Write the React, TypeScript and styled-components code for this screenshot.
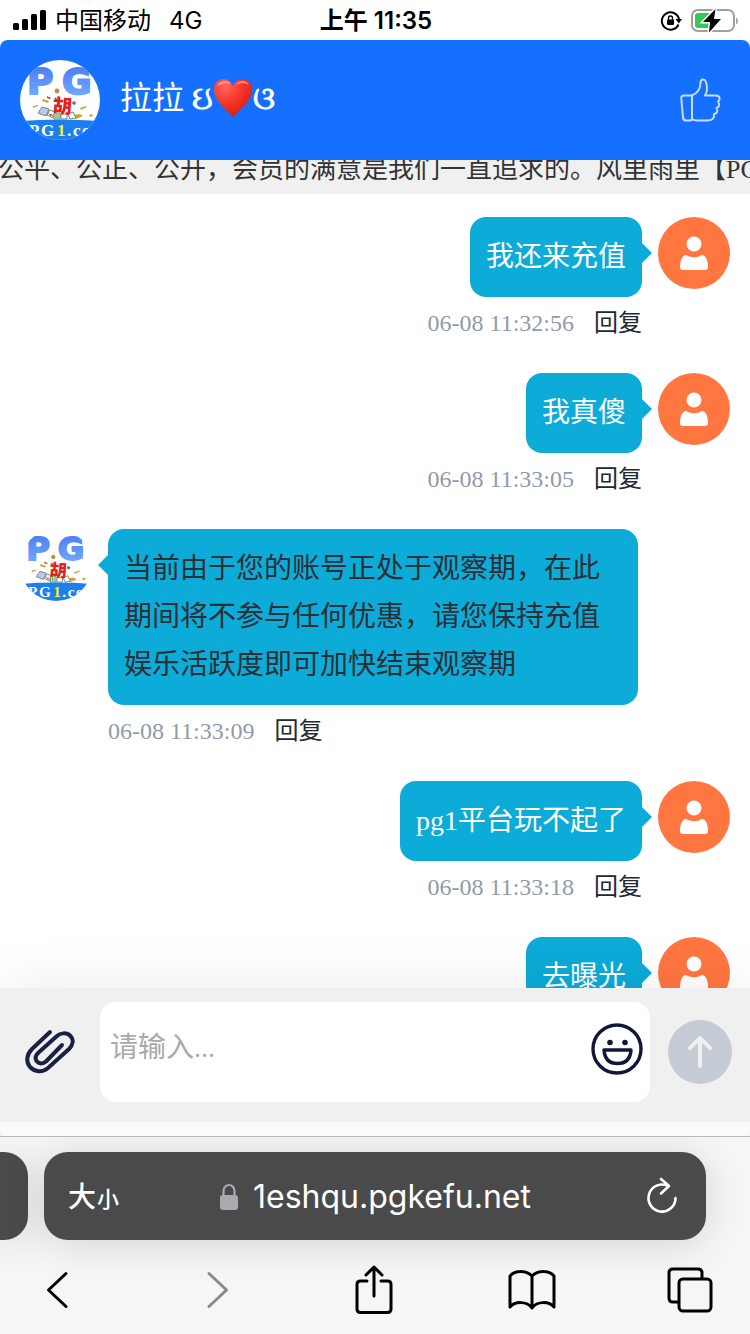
import React from "react";
import styled, { createGlobalStyle } from "styled-components";

const GlobalStyle = createGlobalStyle`
  * { box-sizing: border-box; }
  body { margin: 0; background: #f6f6f6; }
  button { border: 0; padding: 0; background: none; font: inherit; color: inherit; cursor: pointer; }
  svg { display: block; flex: none; }
`;

const serif = `"Liberation Serif", "Noto Sans CJK SC", serif`;
const sans = `Inter, "Noto Sans CJK SC", sans-serif`;

const Page = styled.div`
  display: flex;
  flex-direction: column;
  height: 100vh;
  overflow: hidden;
  background: #f6f6f6;
  font-family: ${serif};
`;

const StatusBar = styled.div`
  flex: none;
  display: grid;
  grid-template-columns: 1fr auto 1fr;
  align-items: center;
  height: 40px;
  padding: 2px 10px 0 12px;
  background: #fff;
  color: #000;
  font-family: ${sans};
  font-size: 24px;
  line-height: 38px;
`;

const StatusSide = styled.div<{ $end?: boolean }>`
  display: flex;
  align-items: center;
  justify-content: ${(p) => (p.$end ? "flex-end" : "flex-start")};
  gap: 8px;
`;

const Network = styled.span`
  margin-left: 10px;
`;

const Clock = styled.div`
  font-weight: 600;
`;

const Header = styled.header`
  flex: none;
  display: flex;
  align-items: center;
  height: 120px;
  padding: 0 28px 0 20px;
  border-radius: 8px 8px 0 0;
  background: #1570ff;
  color: #fff;
`;

const AgentName = styled.h1`
  flex: 1;
  display: flex;
  align-items: center;
  margin: 0 0 4px 20px;
  font-size: 32px;
  line-height: 48px;
  font-weight: 400;
  white-space: pre;
`;

const Ornament = styled.span`
  -webkit-text-stroke: 1px #fff;
`;

const Notice = styled.div`
  flex: none;
  display: flex;
  align-items: flex-end;
  height: 34px;
  overflow: hidden;
  background: #f0f0f0;
  color: #333;
  font-size: 26px;
  line-height: 48px;
  white-space: nowrap;
`;

const NoticeText = styled.span`
  margin-left: -2px;
`;

const Chat = styled.main`
  flex: 1;
  min-height: 0;
  overflow: hidden;
  display: flex;
  flex-direction: column;
  gap: 24px;
  padding: 23px 20px 0;
  background: #fff;
`;

const Message = styled.article<{ $own?: boolean }>`
  flex: none;
  display: flex;
  flex-direction: ${(p) => (p.$own ? "row-reverse" : "row")};
  gap: 16px;
  padding-${(p) => (p.$own ? "left" : "right")}: 92px;
`;

const MessageBody = styled.div<{ $own?: boolean }>`
  display: flex;
  flex-direction: column;
  align-items: ${(p) => (p.$own ? "flex-end" : "flex-start")};
  min-width: 0;
  flex: 1;
`;

const Bubble = styled.p<{ $own?: boolean }>`
  position: relative;
  margin: 0;
  padding: 16px;
  border-radius: 16px;
  background: #0cabd8;
  color: ${(p) => (p.$own ? "#fff" : "#2b2f36")};
  font-size: 28px;
  line-height: 48px;

  &::after {
    content: "";
    position: absolute;
    top: 26px;
    ${(p) => (p.$own ? "left: 100%;" : "right: 100%;")}
    border: 10px solid transparent;
    border-${(p) => (p.$own ? "left" : "right")}-color: #0cabd8;
    border-${(p) => (p.$own ? "right" : "left")}-width: 0;
  }
`;

const Meta = styled.div`
  display: flex;
  align-items: center;
  gap: 20px;
  height: 52px;
  font-size: 24px;
  line-height: 52px;
  color: #8f9bab;
`;

const Reply = styled.button`
  color: #222831;
`;

const Composer = styled.form`
  position: relative;
  flex: none;
  display: flex;
  align-items: center;
  height: 134px;
  padding: 0 18px 6px 24px;
  background: #f0f0f0;
  box-shadow: 0 0 60px rgba(0, 0, 0, 0.08);
`;

const Field = styled.div`
  flex: 1;
  display: flex;
  align-items: flex-start;
  height: 100px;
  margin: 0 18px 0 24px;
  padding-right: 7px;
  border-radius: 16px;
  background: #fff;
`;

const Input = styled.textarea`
  flex: 1;
  min-width: 0;
  height: 100px;
  padding: 22px 0 0 10px;
  border: 0;
  outline: 0;
  resize: none;
  background: none;
  font-family: ${serif};
  font-size: 28px;
  line-height: 48px;
  color: #222831;
  &::placeholder { color: #a9a9a9; opacity: 1; }
`;

const EmojiButton = styled.button`
  margin-top: 21px;
`;

const SendButton = styled.button`
  display: flex;
  align-items: center;
  justify-content: center;
  width: 64px;
  height: 64px;
  border-radius: 50%;
  background: #c5ccd5;
`;

const PageEnd = styled.div`
  flex: none;
  height: 14px;
  position: relative;
  border-radius: 0 0 8px 8px;
  background: #fbfbfb;
`;

const BrowserBar = styled.footer`
  position: relative;
  flex: none;
  border-top: 1px solid #b8b8b8;
  background: #f6f6f6;
  overflow: hidden;
`;

const AddressRow = styled.div`
  display: flex;
  gap: 16px;
  padding: 15px 44px 0 0;
`;

const NeighbourTab = styled.div`
  width: 28px;
  border-radius: 0 24px 24px 0;
  background: #4a4a4a;
  box-shadow: 0 4px 40px rgba(0, 0, 0, 0.14);
`;

const AddressBar = styled.div`
  flex: 1;
  display: grid;
  grid-template-columns: 80px 1fr 80px;
  align-items: center;
  height: 88px;
  padding: 2px 4px 0;
  border-radius: 24px;
  background: #4a4a4a;
  box-shadow: 0 4px 40px rgba(0, 0, 0, 0.14);
  color: #fff;
  font-family: ${sans};
`;

const TextSize = styled.button`
  display: flex;
  align-items: baseline;
  padding: 2px 0 0 20px;
  gap: 1px;
  font-size: 28px;
  line-height: 48px;
  font-weight: 500;
  small { font-size: 22px; }
`;

const Domain = styled.button`
  display: flex;
  align-items: center;
  justify-content: center;
  gap: 14px;
  font-size: 32px;
  line-height: 48px;
`;

const Reload = styled.button`
  display: flex;
  justify-content: center;
  padding-bottom: 4px;
`;

const Toolbar = styled.nav`
  display: flex;
  justify-content: space-between;
  align-items: center;
  height: 94px;
  padding: 6px 22px 0 20px;
`;

const ToolButton = styled.button`
  display: flex;
  align-items: center;
  justify-content: center;
  width: 76px;
  height: 56px;
`;

function Logo({ size }: { size: number }) {
  const id = `logo${size}`;
  return (
    <svg width={size} height={size} viewBox="0 0 80 80" role="img" aria-label="PG1">
      <defs>
        <clipPath id={`${id}c`}><circle cx="40" cy="40" r="40" /></clipPath>
        <linearGradient id={`${id}g`} x1="0" y1="0" x2="0" y2="1">
          <stop offset="0" stopColor="#4576f3" />
          <stop offset="1" stopColor="#77b1ff" />
        </linearGradient>
      </defs>
      <g clipPath={`url(#${id}c)`}>
        <rect width="80" height="80" fill="#fff" />
        <g fontFamily="DejaVu Sans" fontWeight="700" fontSize="36" fill={`url(#${id}g)`} stroke={`url(#${id}g)`} strokeWidth="2">
          <text x="7" y="34">P</text>
          <text x="42" y="34">G</text>
        </g>
        <circle cx="37" cy="31" r="2.4" fill="#c58a3a" />
        <g fill="#d9a13a">
          <path d="M23 39l6 2-1 2-6-2zM60 48l6-2 1 1-6 3zM13 46l5-1 0 1-5 2zM52 55l8-1 3 2-7 3zM69 55l3-1 1 2-3 1z" />
          <path d="M27 36l4 2-1 1-3-1z" fill="#b4442b" />
        </g>
        <path d="M53 41l3 1-1 3-3-1zM34 39l2-2 1 3z" fill="#5d7a62" />
        <g stroke="#6b8a70" strokeWidth="1">
          <path d="M18 53l4-6 7 2-3 7z" fill="#c3c5f5" />
          <path d="M27 55l3-5 5 2-2 6z" fill="#fff" />
          <path d="M34 53h6v6h-6z" fill="#d8f5d5" />
          <path d="M41 54h6v5h-6zM48 54l5-2 3 6-6 1z" fill="#fff" />
        </g>
        <path d="M29 54l4 2M30 56l2-2" stroke="#e0334a" />
        <path d="M36 54v4M38 54v4" stroke="#43ad4d" />
        <text x="33" y="53" fontFamily="Noto Sans CJK SC" fontWeight="900" fontSize="19" fill="#e3201b" transform="rotate(4 42 46)">胡</text>
        <path d="M0 61Q40 58 80 61V80H0z" fill="#1d7fee" />
        <g fontFamily="Liberation Serif" fontWeight="700" fontSize="17" fill="#fff">
          <text x="9" y="76">P</text>
          <text x="21" y="76">G</text>
          <text x="37" y="76" fill="#f5f51c">1</text>
          <text x="47" y="76">.</text>
          <text x="53" y="76">c</text>
          <text x="62" y="76">o</text>
        </g>
      </g>
    </svg>
  );
}

function UserAvatar() {
  return (
    <svg width="72" height="72" viewBox="0 0 72 72" role="img" aria-label="用户">
      <circle cx="36" cy="36" r="36" fill="#ff7641" />
      <circle cx="36" cy="27" r="7.5" fill="#fff" />
      <path d="M28 38q8 4.500 16 0c4 0 6 6 6 12q0 3-3 3H25q-3 0-3-3c0-6 2-12 6-12z" fill="#fff" />
    </svg>
  );
}

type ChatMessage = { text: string; time: string; own?: boolean };

const messages: ChatMessage[] = [
  { text: "我还来充值", time: "06-08 11:32:56", own: true },
  { text: "我真傻", time: "06-08 11:33:05", own: true },
  {
    text: "当前由于您的账号正处于观察期，在此期间将不参与任何优惠，请您保持充值娱乐活跃度即可加快结束观察期",
    time: "06-08 11:33:09",
  },
  { text: "pg1平台玩不起了", time: "06-08 11:33:18", own: true },
  { text: "去曝光", time: "06-08 11:33:25", own: true },
];

export default function App() {
  return (
    <Page>
      <GlobalStyle />
      <StatusBar>
        <StatusSide>
          <svg width="35" height="22" viewBox="0 0 35 22">
            <rect x="1" y="13" width="6" height="7" rx="1.5" />
            <rect x="10" y="9" width="6" height="11" rx="1.5" />
            <rect x="19" y="4" width="6" height="16" rx="1.5" />
            <rect x="28" y="0" width="6" height="20" rx="1.5" />
          </svg>
          <span>中国移动</span>
          <Network>4G</Network>
        </StatusSide>
        <Clock>上午 11:35</Clock>
        <StatusSide $end>
          <svg width="22" height="22" viewBox="0 0 22 22" fill="none" stroke="#000" strokeWidth="2">
            <path d="M18.500 14.500A8.700 8.700 0 1 1 19 9" />
            <path d="M15.500 9h6.500l-3.200 4.500z" fill="#000" stroke="none" />
            <rect x="7" y="9.500" width="7" height="5.500" rx="1" fill="#000" stroke="none" />
            <path d="M8.500 10V8a2 2 0 0 1 4 0v2" strokeWidth="1.400" />
          </svg>
          <svg width="50" height="26" viewBox="0 0 50 26">
            <rect x="2" y="2" width="42" height="21" rx="6" fill="none" stroke="#a0a0a0" strokeWidth="2" />
            <path d="M46 9.500c2.500 1 2.500 6 0 7z" fill="#a0a0a0" />
            <path d="M8 5h16v15H8q-3 0-3-3V8q0-3 3-3z" fill="#35c759" />
            <path d="M25.500 1L13 14h7l-1 10.500L31 11h-7z" fill="#000" stroke="#fff" strokeWidth="3" paintOrder="stroke" />
          </svg>
        </StatusSide>
      </StatusBar>

      <Header>
        <Logo size={80} />
        <AgentName>
          拉拉 <Ornament>ઇ</Ornament>
          <svg width="40" height="40" viewBox="0 0 40 40" role="img" aria-label="❤️">
            <defs>
              <radialGradient id="heart" cx="0.3" cy="0.2" r="0.9">
                <stop offset="0" stopColor="#ff6a5c" />
                <stop offset="0.4" stopColor="#fb3b2f" />
                <stop offset="1" stopColor="#d3170f" />
              </radialGradient>
            </defs>
            <path d="M20 39C12 31 1 22 1 11.500 1 5 5.500 1 10.500 1 15 1 18.500 4 20 8.500 21.500 4 25 1 29.500 1 34.500 1 39 5 39 11.500 39 22 28 31 20 39z" fill="url(#heart)" />
            <path d="M4 8q2.500-5 8-5 4 0 5.500 3-3-1-6-.5Q7 6 4 8zM23 7q2-4 7-4 4 0 6 4-3-2-6.500-2-3 0-6.500 2z" fill="#ffb0a8" opacity=".75" />
          </svg>
          <Ornament>ଓ</Ornament>
        </AgentName>
        <button type="button" aria-label="点赞">
          <svg width="44" height="46" viewBox="0 0 44 46" fill="none" stroke="#c9dcff" strokeWidth="2" strokeLinejoin="round">
            <path d="M13.500 18.500H6q-3 0-2.700 3l1.700 19q.4 3 3 3h4q2 0 2-2V18.500z" />
            <path d="M13.500 18.500q9-3 9-13Q23 2 25.500 2.500 28.500 3 29 11q.2 4-2 7.500h10q5 0 4.500 3.500 0 2-1.500 2.500 1.500 2 1 4T38.500 31q1.500 2 .5 4t-3 2q1 6-6 6.500H19q-3.500 0-5-1.500" />
          </svg>
        </button>
      </Header>

      <Notice>
        <NoticeText>公平、公正、公开，会员的满意是我们一直追求的。风里雨里【PG</NoticeText>
      </Notice>

      <Chat>
        {messages.map((m) => (
          <Message key={m.time} $own={m.own}>
            {m.own ? <UserAvatar /> : <Logo size={72} />}
            <MessageBody $own={m.own}>
              <Bubble $own={m.own}>{m.text}</Bubble>
              <Meta>
                <time>{m.time}</time>
                <Reply type="button">回复</Reply>
              </Meta>
            </MessageBody>
          </Message>
        ))}
      </Chat>

      <Composer onSubmit={(e) => e.preventDefault()}>
        <button type="button" aria-label="附件">
          <svg width="52" height="48" viewBox="0 0 52 48" fill="none" stroke="#1b2145" strokeWidth="4" strokeLinecap="round" strokeLinejoin="round">
            <path d="M26 4L8 21C2 27 2 34 6 39c5 5 12 6 18 1L45 21c4-4 5-9 1.500-13C42.500 4 36 5 33 8L14 25c-3 3-3 6-1 8.500 2 2.500 6 2.500 9 0L38 17" />
          </svg>
        </button>
        <Field>
          <Input aria-label="消息" placeholder="请输入..." />
          <EmojiButton type="button" aria-label="表情">
            <svg width="52" height="52" viewBox="0 0 52 52" fill="none" stroke="#12173a" strokeWidth="3.400" strokeLinejoin="round">
              <circle cx="26" cy="26" r="24" />
              <circle cx="19" cy="19.500" r="2.800" fill="#12173a" stroke="none" />
              <circle cx="34" cy="19.500" r="2.800" fill="#12173a" stroke="none" />
              <path d="M13 27h27Q39 40.500 26.500 40.500T13 27z" />
            </svg>
          </EmojiButton>
        </Field>
        <SendButton type="submit" aria-label="发送">
          <svg width="26" height="34" viewBox="0 0 26 34" fill="none" stroke="#f0f0f0" strokeWidth="4" strokeLinecap="round" strokeLinejoin="round">
            <path d="M13 31V3M3 13L13 3l10 10" />
          </svg>
        </SendButton>
      </Composer>
      <PageEnd />

      <BrowserBar>
        <AddressRow>
          <NeighbourTab />
          <AddressBar>
            <TextSize type="button">大<small>小</small></TextSize>
            <Domain type="button">
              <svg width="20" height="28" viewBox="0 0 20 28">
                <rect x="1" y="12" width="18" height="15" rx="3" fill="#a9a9af" />
                <path d="M4.500 13V8a5.500 6 0 0 1 11 0v5" fill="none" stroke="#a9a9af" strokeWidth="2.200" />
              </svg>
              1eshqu.pgkefu.net
            </Domain>
            <Reload type="button" aria-label="刷新">
              <svg width="34" height="38" viewBox="0 0 34 38" fill="none" stroke="#fff" strokeWidth="2.600" strokeLinecap="round" strokeLinejoin="round">
                <path d="M30.500 22A13.500 13.500 0 1 1 23 10M16 3l8 7-8 7.500" />
              </svg>
            </Reload>
          </AddressBar>
        </AddressRow>
        <Toolbar>
          <ToolButton type="button" aria-label="后退">
            <svg width="24" height="40" viewBox="0 0 24 40" fill="none" stroke="#000" strokeWidth="3" strokeLinecap="round" strokeLinejoin="round">
              <path d="M20 3.500L2.500 20 20 36.500" />
            </svg>
          </ToolButton>
          <ToolButton type="button" aria-label="前进" disabled>
            <svg width="24" height="40" viewBox="0 0 24 40" fill="none" stroke="#8a8a8a" strokeWidth="3" strokeLinecap="round" strokeLinejoin="round">
              <path d="M5 3.500L22.500 20 5 36.500" />
            </svg>
          </ToolButton>
          <ToolButton type="button" aria-label="分享">
            <svg width="40" height="50" viewBox="0 0 40 50" fill="none" stroke="#000" strokeWidth="3" strokeLinecap="round" strokeLinejoin="round">
              <path d="M13 16H6.500Q3 16 3 19.500V44q0 3.500 3.500 3.500h27Q37 47.500 37 44V19.500Q37 16 33.500 16H27M20 31V3M12 10l8-8 8 8" />
            </svg>
          </ToolButton>
          <ToolButton type="button" aria-label="书签">
            <svg width="50" height="42" viewBox="0 0 50 42" fill="none" stroke="#000" strokeWidth="3" strokeLinecap="round" strokeLinejoin="round">
              <path d="M25 7C19 1 8 1 3 7v31c5-6 17-6 22 1V7c6-6 17-6 22 0v31c-5-6-17-6-22 1" />
            </svg>
          </ToolButton>
          <ToolButton type="button" aria-label="标签页">
            <svg width="46" height="46" viewBox="0 0 46 46" fill="none" stroke="#000" strokeWidth="3" strokeLinejoin="round">
              <path d="M12 35H6q-4 0-4-4V6q0-4 4-4h25q4 0 4 4v6" />
              <rect x="12" y="12" width="32" height="32" rx="4" />
            </svg>
          </ToolButton>
        </Toolbar>
      </BrowserBar>
    </Page>
  );
}
